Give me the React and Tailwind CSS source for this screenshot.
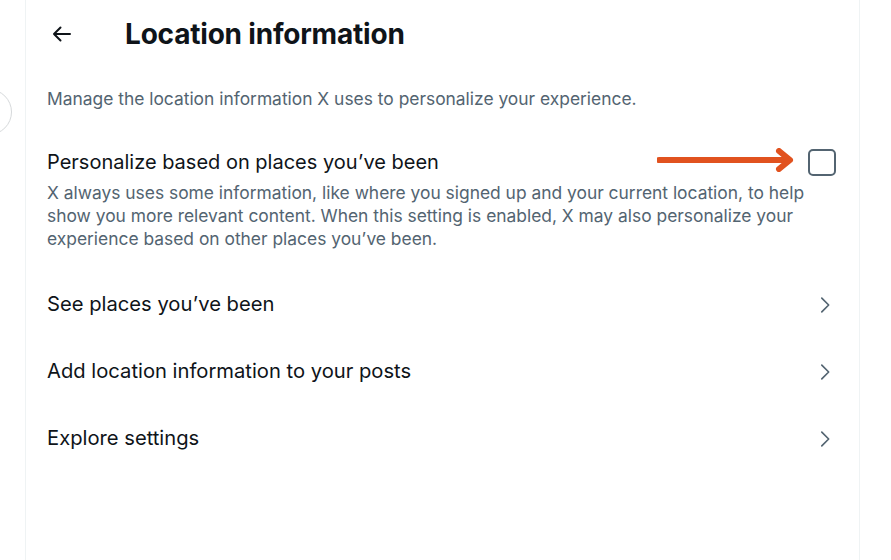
function ChevronRight() {
  return (
    <svg width="22" height="22" viewBox="0 0 24 24" fill="none" stroke="#536471" strokeWidth="1.8" strokeLinecap="round" strokeLinejoin="round">
      <path d="M8.5 4.5 16 12l-7.5 7.5" />
    </svg>
  )
}

function SettingRow({ label }) {
  return (
    <div className="flex h-[67px] items-center justify-between pr-[1px]">
      <span className="text-[20.2px] text-[#0f1419]">{label}</span>
      <ChevronRight />
    </div>
  )
}

export default function App() {
  return (
    <div
      className="relative flex h-[560px] w-[891px] overflow-hidden bg-white"
      style={{ fontFamily: 'Inter, "Open Sans", sans-serif' }}
    >
      {/* partial avatar ring on the sidebar */}
      <div className="absolute left-[-34px] top-[89px] h-[46px] w-[46px] rounded-full border border-[#d6d9db]" />

      <div className="w-[25px] shrink-0" />
      <main className="flex w-[835px] shrink-0 flex-col border-x border-[#eff3f4] pl-[21px] pr-[22px]">
        <header className="flex h-[68px] items-center">
          <svg width="25" height="24" viewBox="0 0 24 24" fill="none" stroke="#0f1419" strokeWidth="2" strokeLinecap="round" strokeLinejoin="round" className="ml-[2px]">
            <path d="M20.5 12H4.5M11 5.5 4.5 12l6.5 6.5" />
          </svg>
          <h1 className="ml-[51px] text-[28px] font-bold tracking-[-0.2px] text-[#0f1419]">Location information</h1>
        </header>

        <p className="mt-[18px] text-[17.4px] text-[#536471]">
          Manage the location information X uses to personalize your experience.
        </p>

        <section className="mt-[35px]">
          <div className="relative flex items-center justify-between">
            <span className="text-[20px] text-[#0f1419]">Personalize based on places you’ve been</span>
            <svg width="142" height="24" viewBox="0 0 142 24" className="absolute left-[610px] top-[1px]">
              <path d="M2 12h128" stroke="#e1521f" strokeWidth="6" strokeLinecap="round" />
              <path d="M122 3l11 9-11 9" fill="none" stroke="#e1521f" strokeWidth="6" strokeLinecap="round" strokeLinejoin="round" />
            </svg>
            <div className="mr-[1px] h-[27px] w-[28px] rounded-[5px] border-2 border-[#536471]" />
          </div>
          <p className="mt-[4px] w-[785px] text-[17.4px] leading-[23px] text-[#536471]">
            X always uses some information, like where you signed up and your current location, to help
            show you more relevant content. When this setting is enabled, X may also personalize your
            experience based on other places you’ve been.
          </p>
        </section>

        <div className="mt-[21px] flex flex-col">
          <SettingRow label="See places you’ve been" />
          <SettingRow label="Add location information to your posts" />
          <SettingRow label="Explore settings" />
        </div>
      </main>
    </div>
  )
}
